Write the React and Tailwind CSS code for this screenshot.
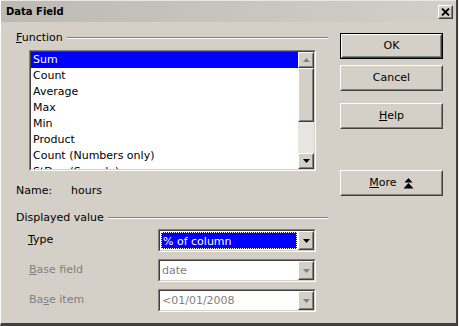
import React from "react";

const font = { fontFamily: '"DejaVu Sans", Verdana, sans-serif' };

// sunken 3D frame (list boxes, combos)
const Sunken = ({ className = "", children }) => (
  <div className={`border border-t-[#808080] border-l-[#808080] border-b-white border-r-white ${className}`}>
    <div className="h-full w-full border border-t-[#404040] border-l-[#404040] border-b-[#d4d0c8] border-r-[#d4d0c8] bg-white flex">
      {children}
    </div>
  </div>
);

// raised 3D button face
const Raised = ({ className = "", children }) => (
  <div className={`border border-t-white border-l-white border-b-[#404040] border-r-[#404040] bg-[#d4d0c8] ${className}`}>
    <div className="h-full w-full border border-t-[#d4d0c8] border-l-[#d4d0c8] border-b-[#808080] border-r-[#808080] flex items-center justify-center">
      {children}
    </div>
  </div>
);

const Arrow = ({ up = false, color = "#000" }) => (
  <svg width="7" height="4" viewBox="0 0 7 4">
    {up ? <polygon points="3.5,0 7,4 0,4" fill={color} /> : <polygon points="0,0 7,0 3.5,4" fill={color} />}
  </svg>
);

const DropButton = ({ disabled }) => (
  <Raised className="w-[16px] h-full">
    <Arrow color={disabled ? "#808080" : "#000"} />
  </Raised>
);

const GroupHeader = ({ children }) => (
  <div className="flex items-center h-[14px]">
    <span className="text-[11px] leading-[14px] pr-1">{children}</span>
    <div className="flex-1 flex flex-col">
      <div className="h-px bg-[#808080]" />
      <div className="h-px bg-white" />
    </div>
  </div>
);

const Button = ({ children, isDefault, className = "" }) => (
  <div className={`${isDefault ? "border border-black" : ""} w-[103px] h-[26px] ${className}`}>
    <Raised className="w-full h-full text-[11px]">{children}</Raised>
  </div>
);

const functions = ["Sum", "Count", "Average", "Max", "Min", "Product", "Count (Numbers only)", "StDev (Sample)"];

export default function App() {
  return (
    <div className="w-[459px] h-[326px] bg-[#f4f3ef] overflow-hidden text-black" style={font}>
      <div className="w-[458px] h-[326px] bg-[#d4d0c8] border-l border-l-white border-r-2 border-r-[#404040] border-b-[3px] border-b-[#404040] flex flex-col">
        {/* Title bar */}
        <div className="h-[22px] flex items-center justify-between pl-[5px] pr-[3px] bg-gradient-to-r from-[#bdbab5] to-[#d2cfc9] border-t border-t-[#e8e6e2]">
          <span className="text-[10px] font-bold">Data Field</span>
          <Raised className="w-[15px] h-[14px]">
            <svg width="9" height="8" viewBox="0 0 9 8">
              <path d="M1 0.5 L8 7.5 M8 0.5 L1 7.5" stroke="#000" strokeWidth="1.8" />
            </svg>
          </Raised>
        </div>

        <div className="flex flex-1">
          {/* Left column */}
          <div className="w-[327px] pl-[15px] pt-[9px]">
            <GroupHeader>
              <span className="underline">F</span>unction
            </GroupHeader>

            <Sunken className="ml-[13px] mt-[5px] w-[287px] h-[121px]">
              <div className="flex-1 overflow-hidden">
                {functions.map((f, i) => (
                  <div
                    key={f}
                    className={`h-[16px] pl-[2px] text-[11px] leading-[16px] whitespace-nowrap ${i === 0 ? "bg-[#0000ff] text-white" : ""}`}
                  >
                    {f}
                  </div>
                ))}
              </div>
              {/* scrollbar */}
              <div className="w-[16px] flex flex-col bg-[#e8e6e2]">
                <Raised className="h-[16px]"><Arrow up color="#808080" /></Raised>
                <Raised className="h-[54px]" />
                <div className="flex-1" />
                <Raised className="h-[16px]"><Arrow /></Raised>
              </div>
            </Sunken>

            <div className="flex text-[11px] mt-[13px] h-[14px] leading-[14px]">
              <span className="w-[55px]">Name:</span>
              <span>hours</span>
            </div>

            <div className="mt-[13px]">
              <GroupHeader>Displayed value</GroupHeader>
            </div>

            <div className="mt-[4px] flex flex-col gap-[7px]">
              <div className="flex items-center h-[23px]">
                <span className="w-[142px] pl-[12px] text-[11px]"><span className="underline">T</span>ype</span>
                <Sunken className="w-[158px] h-[23px]">
                  <div className="flex-1 m-px bg-[#0000ff] border border-dotted border-white text-white text-[11px] leading-[17px] pl-px">% of column</div>
                  <DropButton />
                </Sunken>
              </div>
              <div className="flex items-center h-[23px]">
                <span className="w-[142px] pl-[13px] text-[11px] text-[#808080]"><span className="underline">B</span>ase field</span>
                <Sunken className="w-[158px] h-[23px]">
                  <div className="flex-1 text-[11px] leading-[19px] pl-[2px] text-[#808080]">date</div>
                  <DropButton disabled />
                </Sunken>
              </div>
              <div className="flex items-center h-[23px]">
                <span className="w-[142px] pl-[13px] text-[11px] text-[#808080]">Ba<span className="underline">s</span>e item</span>
                <Sunken className="w-[158px] h-[23px]">
                  <div className="flex-1 text-[11px] leading-[19px] pl-[2px] text-[#808080]">&lt;01/01/2008</div>
                  <DropButton disabled />
                </Sunken>
              </div>
            </div>
          </div>

          {/* Right column */}
          <div className="pl-[12px] pt-[11px] flex flex-col">
            <Button isDefault>OK</Button>
            <Button className="mt-[6px]">Cancel</Button>
            <Button className="mt-[12px]"><span><span className="underline">H</span>elp</span></Button>
            <Button className="mt-[41px]">
              <span className="flex items-center gap-[6px]">
                <span><span className="underline">M</span>ore</span>
                <svg width="11" height="11" viewBox="0 0 11 11">
                  <polygon points="5.5,0 9.5,4.5 1.5,4.5" fill="#000" />
                  <polygon points="5.5,5 10.5,10.5 0.5,10.5" fill="#000" />
                </svg>
              </span>
            </Button>
          </div>
        </div>
      </div>
    </div>
  );
}
